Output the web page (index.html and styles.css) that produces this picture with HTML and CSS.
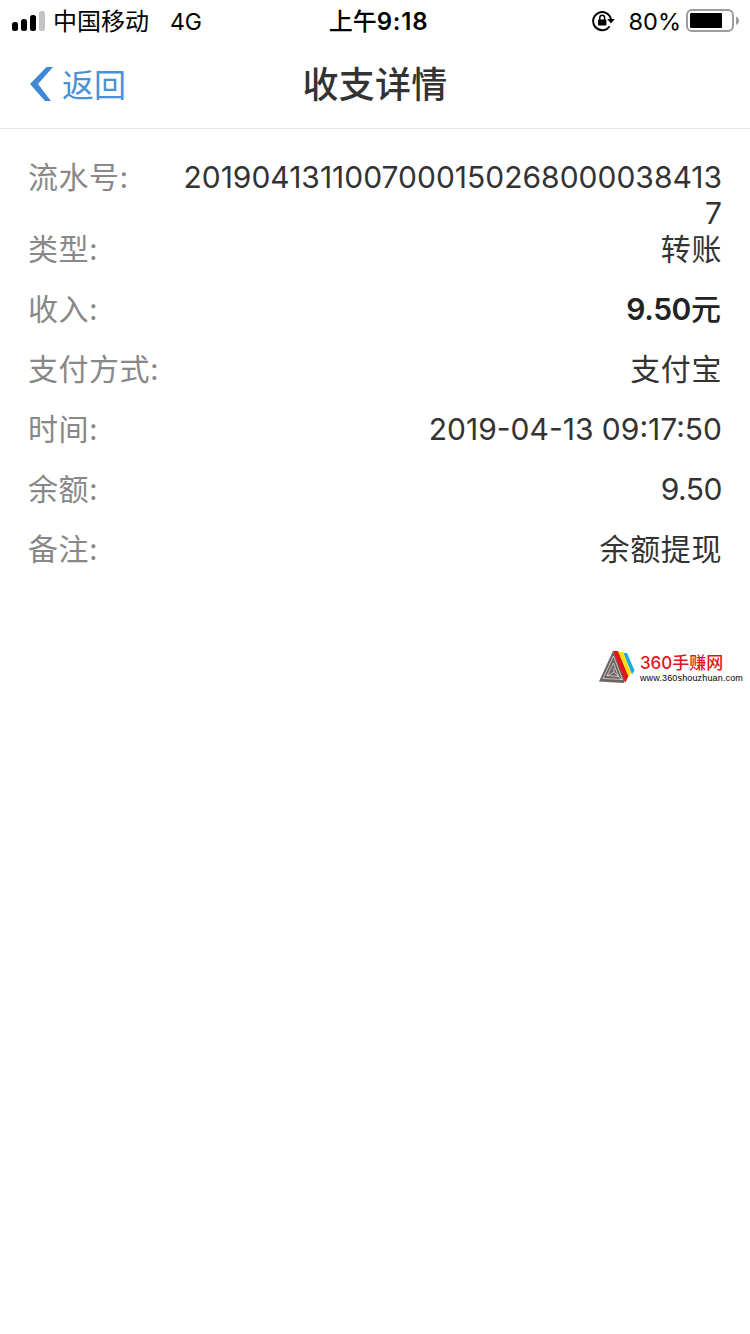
FILE: index.html
```html
<!DOCTYPE html>
<html lang="zh-CN">
<head>
    <meta charset="UTF-8">
    <title>收支详情</title>
    <link rel="stylesheet" href="styles.css">
</head>
<body>
<div class="status">
    <div class="status-left">
        <svg class="signal" width="33" height="20" viewBox="0 0 33 20">
            <rect x="0" y="11" width="6" height="9" rx="2.5"/>
            <rect x="9" y="8" width="6" height="12" rx="2.5"/>
            <rect x="18" y="4" width="6" height="16" rx="2.5"/>
            <rect x="27" y="0" width="6" height="20" rx="2.5" fill="#c4c4c4"/>
        </svg>
        <span class="carrier">中国移动</span>
        <span class="network">4G</span>
    </div>
    <div class="status-time">上午<b>9:18</b></div>
    <div class="status-right">
        <svg class="lock" width="24" height="22" viewBox="0 0 24 22">
            <path d="M17.600 16.200A9 9 0 1 1 19 9.500" fill="none" stroke="#000" stroke-width="2"/>
            <path d="M15.200 9h7.600l-3.800 4.600z"/>
            <rect x="6" y="9.600" width="8.400" height="6" rx=".8"/>
            <path d="M7.800 10V7.600a2.400 2.400 0 0 1 4.800 0V10" fill="none" stroke="#000" stroke-width="1.500"/>
        </svg>
        <span class="percent">80%</span>
        <svg class="battery" width="54" height="24" viewBox="0 0 54 24">
            <rect x="2" y="1" width="46" height="21" rx="5" fill="none" stroke="#9c9c9c" stroke-width="2"/>
            <rect x="5" y="4" width="32" height="15" rx="1"/>
            <path d="M51 7.500c4 1.500 4 7 0 8.500z" fill="#9c9c9c"/>
        </svg>
    </div>
</div>
<div class="header">
    <a href="javascript:;" class="back">
        <svg width="24" height="34" viewBox="0 0 24 34">
            <path d="M16.500 0h6.500L8 17 21 34h-6L0 17z" fill="#3f88d8"/>
        </svg>
        <span>返回</span>
    </a>
    <h1 class="title">收支详情</h1>
</div>
<div class="detail">
    <div class="row long"><span class="label">流水号:</span><span class="value">20190413110070001502680000384137</span></div>
    <div class="row"><span class="label">类型:</span><span class="value cn">转账</span></div>
    <div class="row"><span class="label">收入:</span><span class="value money"><b>9.50</b>元</span></div>
    <div class="row"><span class="label">支付方式:</span><span class="value cn">支付宝</span></div>
    <div class="row"><span class="label">时间:</span><span class="value">2019-04-13 09:17:50</span></div>
    <div class="row"><span class="label">余额:</span><span class="value balance">9.50</span></div>
    <div class="row"><span class="label">备注:</span><span class="value cn">余额提现</span></div>
</div>
<div class="mark">
    <svg width="36" height="33" viewBox="0 0 36 33">
        <path d="M14 0L0 30.500 25 32 27 27z" fill="#6d6361"/>
        <path d="M14.500 5L4 27.500 23.500 28.500zM14.500 12L8 24.500 19.500 25.500z" fill="none" stroke="#fff" stroke-width=".6"/>
        <path d="M15 17v4l8 8M15 21l-7 4" fill="none" stroke="#fff" stroke-width=".6"/>
        <path d="M14 0h5l10.500 25-3 6.500z" fill="#e2141c"/>
        <path d="M19.500 1h4.500l8 20.500-2.300 4.500z" fill="#ffe100"/>
        <path d="M24.500 2h3.500l7.500 17.500-2.500 4z" fill="#19a9e1"/>
    </svg>
    <div class="mark-text">
        <div class="mark-name">360手赚网</div>
        <div class="mark-url">www.360shouzhuan.com</div>
    </div>
</div>
</body>
</html>
```
FILE: styles.css
```css
body {
    margin: 0;
    background-color: #fff;
    color: #333;
    font-family: Inter, "Noto Sans CJK SC", sans-serif;
}

.status {
    height: 40px;
    padding: 0 11px 0 12px;
    display: grid;
    grid-template-columns: 1fr auto 1fr;
    align-items: center;
    color: #000;
    font-size: 24px;
    line-height: 40px;
}

.status-left,
.status-right {
    display: flex;
    align-items: center;
}

.status-right {
    justify-content: flex-end;
}

.carrier {
    margin-left: 8px;
    padding-top: 2px;
}

.network {
    margin-left: 21px;
    padding-top: 2px;
    font-size: 23px;
}

.status-time {
    padding: 2px 0 0 6px;
    font-weight: 500;
}

.status-time b {
    font-weight: 600;
    letter-spacing: 0.8px;
}

.percent {
    margin: 0 4px 0 13px;
    padding-top: 2px;
    font-size: 23.5px;
}

.header {
    height: 88px;
    padding: 0 30px;
    display: grid;
    grid-template-columns: 1fr auto 1fr;
    align-items: center;
    border-bottom: 1px solid #e6e6e6;
}

.back {
    display: flex;
    align-items: center;
    gap: 8px;
    color: #4a90d4;
    font-size: 32px;
    text-decoration: none;
}

.back span {
    padding-bottom: 3px;
}

.title {
    margin: 0;
    padding-bottom: 4px;
    font-size: 36px;
    font-weight: 500;
    letter-spacing: 0.3px;
}

.detail {
    padding: 30px 28px 0;
    font-size: 30px;
    line-height: 36px;
}

.row {
    display: flex;
    justify-content: space-between;
    margin-bottom: 24px;
}

.long {
    margin-bottom: 0;
}

.label {
    color: #888;
    letter-spacing: 0.5px;
    white-space: nowrap;
}

.value {
    max-width: 540px;
    text-align: right;
    word-break: break-all;
}

.cn {
    letter-spacing: 0.6px;
}

.balance {
    letter-spacing: -0.5px;
}

.money {
    padding-right: 1px;
    color: #222;
    font-weight: 500;
}

.money b {
    font-weight: 600;
    letter-spacing: -0.4px;
}

.mark {
    display: flex;
    justify-content: flex-end;
    gap: 5px;
    margin-top: 84px;
    padding-right: 7px;
}

.mark-name {
    color: #e2141c;
    font-size: 17px;
    font-weight: 500;
    line-height: 24px;
}

.mark-url {
    color: #000;
    font-family: "Liberation Sans", sans-serif;
    font-size: 9px;
    letter-spacing: 0.15px;
    line-height: 7px;
}
```
